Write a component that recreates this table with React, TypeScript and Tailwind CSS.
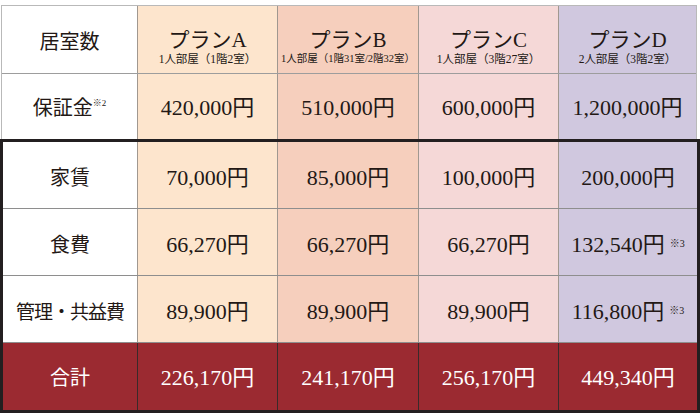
const plans = [
  {
    name: 'プランA',
    sub: '1人部屋（1階2室）',
    subSize: 'text-[11.5px]',
    bg: 'bg-[#fde5cd]',
    deposit: '420,000円',
    rent: '70,000円',
    food: '66,270円',
    fee: '89,900円',
    total: '226,170円',
    w: 'w-[140px]',
  },
  {
    name: 'プランB',
    sub: '1人部屋（1階31室/2階32室）',
    subSize: 'text-[10.5px]',
    bg: 'bg-[#f6cfbd]',
    deposit: '510,000円',
    rent: '85,000円',
    food: '66,270円',
    fee: '89,900円',
    total: '241,170円',
    w: 'w-[141px]',
  },
  {
    name: 'プランC',
    sub: '1人部屋（3階27室）',
    subSize: 'text-[11.5px]',
    bg: 'bg-[#f5d8d7]',
    deposit: '600,000円',
    rent: '100,000円',
    food: '66,270円',
    fee: '89,900円',
    total: '256,170円',
    w: 'w-[140px]',
  },
  {
    name: 'プランD',
    sub: '2人部屋（3階2室）',
    subSize: 'text-[11.5px]',
    bg: 'bg-[#d0c8df]',
    deposit: '1,200,000円',
    rent: '200,000円',
    food: '132,540円',
    fee: '116,800円',
    total: '449,340円',
    w: 'w-[139px]',
    note: true,
  },
];

type Plan = (typeof plans)[number];

const rows: { label: string; key: 'rent' | 'food' | 'fee'; tight?: boolean }[] = [
  { label: '家賃', key: 'rent' },
  { label: '食費', key: 'food' },
  { label: '管理・共益費', key: 'fee', tight: true },
];

function Note({ children }: { children: string }) {
  return <span className="ml-[5px] text-[10px] leading-none self-start mt-[24px]">{children}</span>;
}

export default function App() {
  return (
    <div className="w-[700px] h-[413px] bg-white text-[#231815] font-['Liberation_Serif','Noto_Sans_CJK_JP',serif]">
      {/* upper block: header + deposit */}
      <div className="mt-[5px] ml-[1px] w-[696px] border-t border-x border-[#b9b9b9]">
        <div className="flex h-[68px] border-b border-[#9d9d9d]">
          <div className="w-[135px] flex items-center justify-center pt-[5px] text-[20px] leading-none">居室数</div>
          {plans.map((p, i) => (
            <div
              key={p.name}
              className={`${i === 3 ? 'w-[138px]' : p.w} ${p.bg} border-l border-[#a09890] flex flex-col items-center justify-center pt-[14px]`}
            >
              <div className="text-[21px] leading-[24px]">{p.name}</div>
              <div className={`${p.subSize} leading-[14px] whitespace-nowrap`}>{p.sub}</div>
            </div>
          ))}
        </div>
        <div className="flex h-[65px]">
          <div className="w-[135px] flex items-center justify-center pt-[3px] text-[20px] leading-none">
            保証金<span className="text-[9px] self-start mt-[22px]">※2</span>
          </div>
          {plans.map((p, i) => (
            <div
              key={p.name}
              className={`${i === 3 ? 'w-[138px]' : p.w} ${p.bg} border-l border-[#a09890] flex items-center justify-center pt-[3px] text-[22px] leading-none`}
            >
              {p.deposit}
            </div>
          ))}
        </div>
      </div>

      {/* lower block: monthly costs */}
      <div className="w-[700px] h-[274px] border-[3px] border-[#231f20]">
        {rows.map((r) => (
          <div key={r.key} className="flex h-[67px] border-b border-[#8e8e8e]">
            <div
              className={`w-[134px] bg-white flex items-center justify-center pt-[6px] leading-none ${
                r.tight ? 'text-[19px] tracking-[-1px]' : 'text-[20px]'
              }`}
            >
              {r.label}
            </div>
            {plans.map((p: Plan) => (
              <div
                key={p.name}
                className={`${p.w} ${p.bg} border-l border-[#a09890] flex items-center justify-center pt-[6px] text-[22px] leading-none`}
              >
                <span>{p[r.key]}</span>
                {p.note && r.key !== 'rent' && <Note>※3</Note>}
              </div>
            ))}
          </div>
        ))}
        <div className="flex h-[67px] bg-[#9b2a31] text-white">
          <div className="w-[134px] flex items-center justify-center pt-[3px] text-[20px] leading-none">合計</div>
          {plans.map((p) => (
            <div
              key={p.name}
              className={`${p.w} border-l border-[#3a2a2a] flex items-center justify-center pt-[3px] text-[22px] leading-none`}
            >
              {p.total}
            </div>
          ))}
        </div>
      </div>
    </div>
  );
}
